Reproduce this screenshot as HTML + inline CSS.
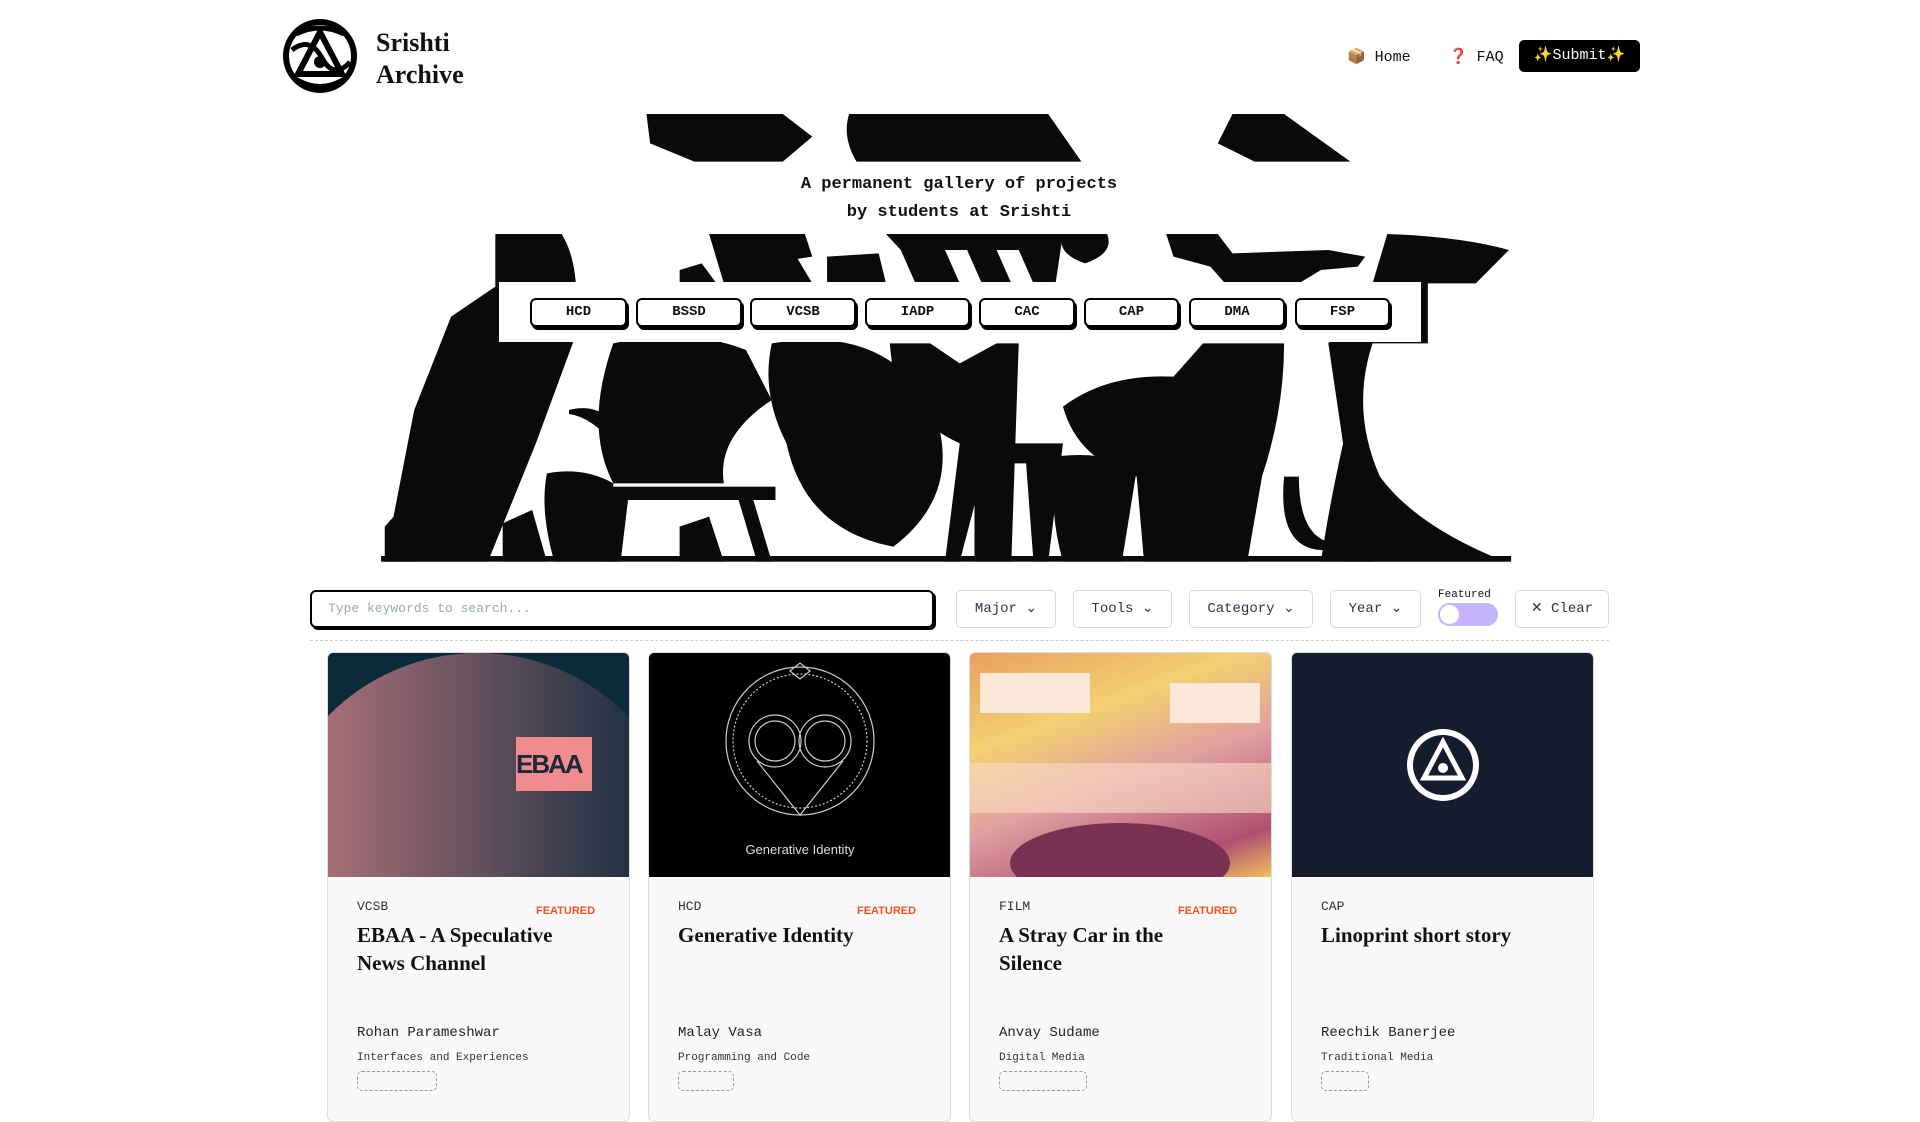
<!DOCTYPE html>
<html><head><meta charset="utf-8"><style>
*{box-sizing:border-box;margin:0;padding:0}
body{width:1920px;height:1080px;overflow:hidden;background:#fff;font-family:"Liberation Mono",monospace;color:#111;position:relative}
.abs{position:absolute}
.logo-t{left:376px;top:27px;font-family:"Liberation Serif",serif;font-weight:bold;font-size:26px;line-height:32px}
.nav{top:48px;font-size:15px;line-height:20px}
.sub{left:1519px;top:40px;width:121px;height:32px;background:#000;color:#fff;border-radius:5px;font-size:15px;line-height:32px;text-align:center}
.tag{left:0;width:1918px;text-align:center;font-weight:bold;font-size:17px;line-height:28px;top:171px}
.bar{left:499px;top:282px;width:922px;height:60px;background:#fff}
.btn{position:absolute;top:16px;height:29px;border:2px solid #000;border-radius:6px;box-shadow:2px 3px 0 #000;background:#fff;font-weight:bold;font-size:14px;line-height:25px;text-align:center}
.search{left:310px;top:590px;width:624px;height:38px;border:2px solid #000;border-radius:6px;box-shadow:2px 2px 0 #000;font-size:13px;color:#9aa;padding-left:16px;line-height:34px}
.dd{top:590px;height:38px;border:1px solid #d8d8de;border-radius:5px;font-size:14px;color:#334;line-height:36px;text-align:center}
.card{width:303px;height:470px;background:#f9f9fa;border:1px solid #ddd;border-radius:6px;top:652px;overflow:hidden}
.card .img{height:224px;position:relative;overflow:hidden}
.maj{position:absolute;left:29px;top:246px;font-size:13px;color:#333}
.feat{position:absolute;left:208px;top:252px;font-size:11px;color:#f4511e;font-weight:bold;font-family:"Liberation Sans",sans-serif}
.title{position:absolute;left:29px;top:268px;width:215px;font-family:"Liberation Serif",serif;font-size:21px;line-height:28px;font-weight:bold}
.auth{position:absolute;left:29px;top:372px;font-size:14px;color:#222}
.cat{position:absolute;left:29px;top:399px;font-size:11px;color:#333}
.tg{position:absolute;left:29px;top:418px;width:80px;height:20px;border:1px dashed #999;border-radius:5px}
</style></head><body>
<svg class="abs" style="left:282px;top:18px" width="76" height="76" viewBox="0 0 76 76"><circle cx="38" cy="38" r="37" fill="#000"/><circle cx="38" cy="38" r="31" fill="#fff"/><path d="M38 14 L60 56 L16 56 Z" fill="none" stroke="#000" stroke-width="6"/><path d="M10 32 Q28 18 40 40 Q52 62 68 44" fill="none" stroke="#000" stroke-width="5"/><circle cx="38" cy="44" r="6" fill="#000"/><path d="M14 62 Q38 76 62 62" stroke="#000" stroke-width="6" fill="none"/><path d="M14 16 Q38 4 62 16" stroke="#000" stroke-width="5" fill="none"/></svg>
<div class="abs logo-t">Srishti<br>Archive</div>
<div class="abs nav" style="left:1347px">📦 Home</div>
<div class="abs nav" style="left:1449px">❓ FAQ</div>
<div class="abs sub">✨Submit✨</div>

<svg class="abs" style="left:370px;top:110px" width="1150" height="460" viewBox="0 0 1560 1380" preserveAspectRatio="none">
<g fill="#0a0a0a">
<path d="M375 12 H560 L600 80 L560 155 H440 L380 100 Z"/>
<path d="M650 12 H920 L965 155 H660 Q640 80 650 12Z"/>
<path d="M1170 12 H1240 L1330 155 H1200 L1150 100 Z"/>
<path d="M170 372 L260 372 Q290 480 275 700 L225 1000 L160 1355 H20 L60 900 L110 620 L170 530Z"/>
<path d="M420 480 L450 460 L470 520 H420Z"/>
<path d="M460 372 H560 L600 520 H480Z"/>
<path d="M560 372 H590 L600 440 L570 450Z"/>
<path d="M620 440 L690 430 L700 520 H620Z"/>
<path d="M700 372 H940 L930 520 H900 L880 420 H850 L870 520 H830 L810 420 H780 L800 520 H740 L720 420Z"/>
<path d="M940 372 H1000 Q1010 430 970 460 Q930 430 940 372Z"/>
<path d="M1080 372 H1150 L1170 430 L1300 420 L1350 440 L1340 470 L1290 480 L1260 520 H1160 L1140 470 L1090 440Z"/>
<path d="M1380 372 Q1480 380 1545 420 L1500 520 H1435 V700 L1360 700 Q1330 900 1370 1100 Q1420 1250 1540 1355 H1290 Q1300 1200 1320 1000 L1300 700 L1360 520 Z"/>
<path d="M330 700 Q430 650 510 720 L545 870 Q470 980 480 1120 H330 Q290 950 330 700Z"/>
<path d="M270 900 Q320 870 355 1000 L335 1010 Q300 920 270 912Z"/>
<rect x="305" y="1130" width="245" height="40"/>
<path d="M330 1170 H350 L340 1355 H320Z"/><path d="M500 1170 H520 L545 1355 H525Z"/>
<path d="M240 1090 Q290 1070 330 1120 L330 1355 H250 Q230 1200 240 1090Z"/>
<path d="M545 700 Q700 640 765 900 Q805 1150 710 1310 Q590 1260 565 1000 Q530 850 545 700Z"/>
<path d="M705 700 H760 L800 760 L850 700 H880 L870 1355 H840 L830 1100 L800 1355 H780 L800 1000 Q760 960 740 900 L710 800Z"/>
<path d="M820 1000 H940 L920 1355 H900 L890 1060 H850 L840 1355 H820Z"/>
<path d="M940 890 Q1000 790 1090 800 L1130 700 H1240 Q1240 900 1210 1100 L1190 1355 H1050 L1040 1100 Q960 1050 940 890Z"/>
<path d="M930 1040 Q1000 1020 1040 1080 L1020 1355 H940 Q920 1200 930 1040Z"/>
<path d="M1240 1100 Q1230 1330 1300 1320 L1310 1300 Q1260 1290 1260 1100Z"/>
<path d="M20 1250 L40 1200 L60 1355 H20Z M180 1240 L220 1200 L240 1355 H180Z M420 1250 L460 1220 L480 1355 H420Z M1320 1250 L1350 1220 L1360 1355 H1320Z"/>
<rect x="15" y="1338" width="1533" height="17"/>
</g></svg>
<div class="abs tag">A permanent gallery of projects<br>by students at Srishti</div>
<div class="abs bar">
<div class="btn" style="left:31px;width:97px">HCD</div>
<div class="btn" style="left:137px;width:106px">BSSD</div>
<div class="btn" style="left:251px;width:106px">VCSB</div>
<div class="btn" style="left:366px;width:105px">IADP</div>
<div class="btn" style="left:480px;width:96px">CAC</div>
<div class="btn" style="left:585px;width:95px">CAP</div>
<div class="btn" style="left:690px;width:96px">DMA</div>
<div class="btn" style="left:796px;width:95px">FSP</div>
</div>

<div class="abs search">Type keywords to search...</div>
<div class="abs dd" style="left:956px;width:100px">Major ⌄</div>
<div class="abs dd" style="left:1073px;width:99px">Tools ⌄</div>
<div class="abs dd" style="left:1189px;width:124px">Category ⌄</div>
<div class="abs dd" style="left:1330px;width:91px">Year ⌄</div>
<div class="abs" style="left:1438px;top:589px;font-size:11px">Featured</div>
<div class="abs" style="left:1438px;top:603px;width:60px;height:23px;border-radius:12px;background:#c4b5fd"><div style="position:absolute;left:2px;top:2px;width:19px;height:19px;border-radius:10px;background:#fff"></div></div>
<div class="abs dd" style="left:1515px;width:94px">✕ Clear</div>
<div class="abs" style="left:310px;top:640px;width:1299px;border-top:1px dashed #ccc"></div>

<div class="abs card" style="left:327px"><div class="img" style="background:#0b2a3a"><div style="position:absolute;top:0;width:420px;height:420px;border-radius:50%;left:-60px;background:linear-gradient(90deg,#c07a80,#08263a)"></div><div style="position:absolute;left:188px;top:84px;width:76px;height:54px;background:#f08c8c;color:#1a2a3a;font:bold 26px 'Liberation Sans',sans-serif;line-height:54px;letter-spacing:-2px">EBAA</div></div>
<div class="maj">VCSB</div><div class="feat">FEATURED</div><div class="title">EBAA - A Speculative News Channel</div><div class="auth">Rohan Parameshwar</div><div class="cat">Interfaces and Experiences</div><div class="tg"></div></div>

<div class="abs card" style="left:648px"><div class="img" style="background:#000"><svg width="303" height="224"><g fill="none" stroke="#ccc" stroke-width="1.2"><circle cx="151" cy="88" r="74"/><circle cx="151" cy="88" r="67" stroke-dasharray="2 2"/><circle cx="126" cy="88" r="26"/><circle cx="176" cy="88" r="26"/><circle cx="126" cy="88" r="20"/><circle cx="176" cy="88" r="20"/><path d="M108 108 L151 162 L194 108"/><path d="M141 18 L151 10 L161 18 L151 26Z"/></g><text x="151" y="201" fill="#ddd" font-family="Liberation Sans" font-size="13" text-anchor="middle">Generative Identity</text></svg></div>
<div class="maj">HCD</div><div class="feat">FEATURED</div><div class="title">Generative Identity</div><div class="auth">Malay Vasa</div><div class="cat">Programming and Code</div><div class="tg" style="width:56px"></div></div>

<div class="abs card" style="left:969px"><div class="img" style="background:linear-gradient(160deg,#e8a060,#f4d070 30%,#e0a0a0 55%,#b05070 85%,#f0c060)"><div style="position:absolute;left:10px;top:20px;width:110px;height:40px;background:#fbe8d8"></div><div style="position:absolute;left:200px;top:30px;width:90px;height:40px;background:#fbe8d8"></div><div style="position:absolute;left:0;top:110px;width:303px;height:50px;background:rgba(250,220,200,.6)"></div><div style="position:absolute;left:40px;top:170px;width:220px;height:80px;border-radius:50%;background:#7a3050"></div></div>
<div class="maj">FILM</div><div class="feat">FEATURED</div><div class="title">A Stray Car in the Silence</div><div class="auth">Anvay Sudame</div><div class="cat">Digital Media</div><div class="tg" style="width:88px"></div></div>

<div class="abs card" style="left:1291px"><div class="img" style="background:#141d2e"><svg width="303" height="224"><circle cx="151" cy="112" r="36" fill="#fff"/><circle cx="151" cy="112" r="30" fill="#141d2e"/><path d="M151 89 L170 125 L132 125Z" fill="none" stroke="#fff" stroke-width="5"/><circle cx="151" cy="115" r="5" fill="#fff"/></svg></div>
<div class="maj">CAP</div><div class="title">Linoprint short story</div><div class="auth">Reechik Banerjee</div><div class="cat">Traditional Media</div><div class="tg" style="width:48px"></div></div>
</body></html>
